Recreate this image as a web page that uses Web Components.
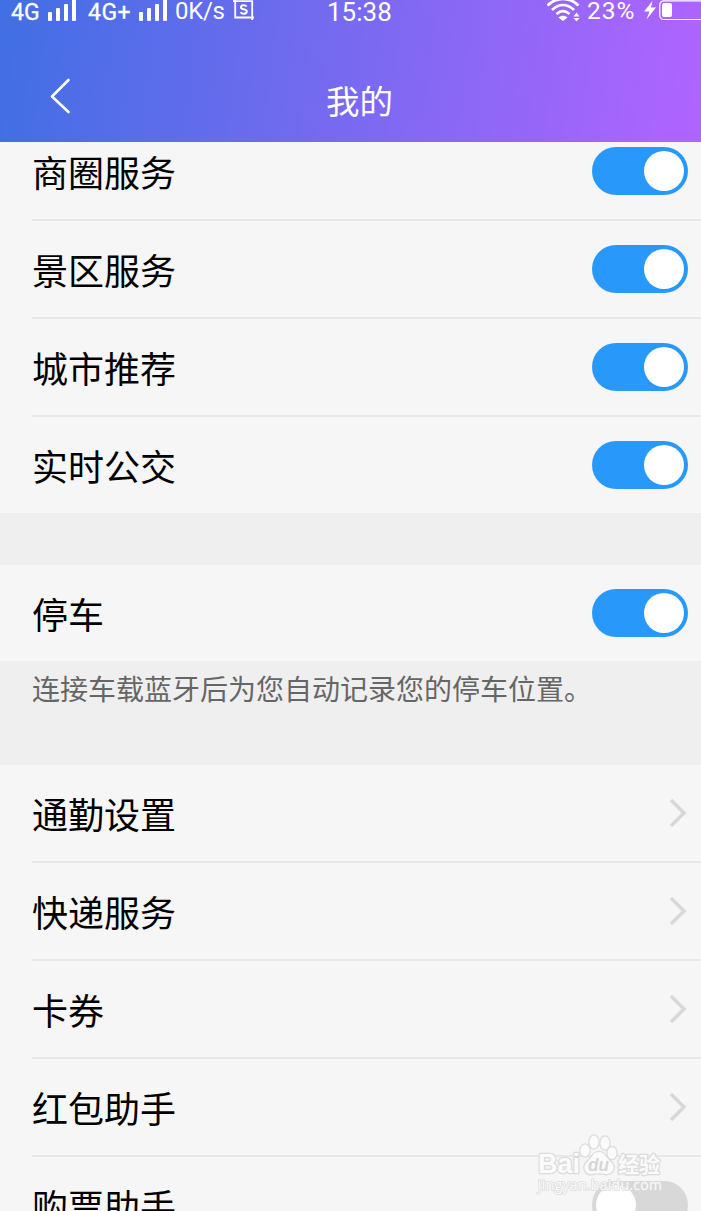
<!DOCTYPE html>
<html lang="zh-CN">
<head>
<meta charset="utf-8">
<title>我的</title>
<style>
  body {
    margin: 0;
    height: 1211px;
    overflow: hidden;
    background: #efefef;
    color: #000;
    font-family: "Noto Sans CJK SC", sans-serif;
  }
</style>
</head>
<body>

<template id="status-bar-template">
  <style>
    :host {
      display: grid;
      grid-template-columns: 327px 220px 154px;
      height: 28px;
      color: #fff;
      font-family: Roboto, sans-serif;
      line-height: 24px;
      white-space: nowrap;
    }
    div {
      display: flex;
      align-items: flex-start;
    }
    svg {
      display: block;
      flex: none;
    }
    span {
      flex: none;
    }
    .net {
      padding-left: 11px;
      font-size: 23px;
    }
    .net span {
      padding-top: 1px;
      -webkit-text-stroke: 0.3px #fff;
    }
    .sim1 { width: 37px; }
    .sim2 {
      width: 50px;
      margin-left: 12px;
      letter-spacing: 0.5px;
    }
    .net .speed {
      width: 57px;
      margin-left: 8px;
      font-size: 24px;
      padding-top: 0;
      line-height: 23px;
      letter-spacing: -0.3px;
      -webkit-text-stroke: 0;
    }
    .time {
      font-size: 26px;
    }
    .battery span {
      width: 57px;
      margin-left: 7px;
      font-size: 24.5px;
      line-height: 22px;
      letter-spacing: 1px;
    }
  </style>
  <div class="net">
    <span class="sim1">4G</span>
    <svg width="28" height="24" fill="#fff">
      <rect y="12" width="4" height="9" rx="1"/><rect x="8" y="8" width="4" height="13" rx="1"/>
      <rect x="16" y="4" width="4" height="17" rx="1"/><rect x="24" y="-2" width="4" height="23" rx="1"/>
    </svg>
    <span class="sim2">4G+</span>
    <svg width="29" height="24" fill="#fff">
      <rect x="1" y="12" width="4" height="9" rx="1"/><rect x="9" y="8" width="4" height="13" rx="1"/>
      <rect x="17" y="4" width="4" height="17" rx="1"/><rect x="25" y="-2" width="4" height="23" rx="1"/>
    </svg>
    <span class="speed">0K/s</span>
    <svg width="24" height="24" fill="none" stroke="#fff" stroke-width="1.800">
      <path d="M1 1.200H20.200V20M3.200 -1V17.500H22"/>
      <path stroke-width="2" d="M14.600 6.500C13.300 4.800 9 4.800 9 7.400C9 10.200 14.800 8.400 14.800 11.500C14.800 14.400 9.800 14.200 8.600 12.200"/>
    </svg>
  </div>
  <div class="time"><span>15:38</span></div>
  <div class="battery">
    <svg width="33" height="24" fill="none" stroke="#fff" stroke-width="2.800">
      <path d="M.5 5.500C10 -3.500 22 -3.500 31.500 5.500M5 10C12 3.500 20 3.500 27 10M9.500 14C14 10 18 10 22.500 14"/>
      <path fill="#fff" stroke="none" d="M11.500 17.500C14.500 15.200 17.500 15.200 20.500 17.500L16 21ZM26.500 16.500L29.500 12.500L32.500 16.500ZM26.500 18L29.500 21.500L32.500 18Z"/>
    </svg>
    <span>23%</span>
    <svg width="57" height="24">
      <path fill="#fff" d="M8.500 1L0 11.500H5.500L2.500 19.500L12 7.500H7Z"/>
      <rect x="15.800" y=".8" width="50" height="18.700" rx="4" fill="none" stroke="#fff" stroke-width="1.200"/>
      <rect x="18" y="3" width="10" height="14" rx="2" fill="#fff"/>
    </svg>
  </div>
</template>

<template id="app-header-template">
  <style>
    :host {
      display: block;
      position: relative;
      z-index: 1;
      height: 142px;
      color: #fff;
      background: linear-gradient(97deg, #416fe3, #b064ff);
    }
    nav {
      display: grid;
      grid-template-columns: 326px 1fr;
      height: 114px;
    }
    svg {
      display: block;
      margin: 49px 0 0 49px;
    }
    h1 {
      margin: 0;
      padding-top: 52px;
      font-size: 33.5px;
      font-weight: 400;
      line-height: 40px;
    }
  </style>
  <status-bar></status-bar>
  <nav>
    <svg width="24" height="38" fill="none" stroke="#fff" stroke-width="2.600" stroke-linecap="round" stroke-linejoin="round">
      <path d="M19.500 3L3 19.500L19.500 35"/>
    </svg>
    <h1><slot></slot></h1>
  </nav>
</template>

<template id="toggle-switch-template">
  <style>
    :host {
      display: flex;
      box-sizing: border-box;
      width: 96px;
      height: 48px;
      padding: 4px;
      border-radius: 24px;
      background: #d8d8d8;
    }
    :host([on]) {
      justify-content: flex-end;
      background: #2898fa;
    }
    i {
      width: 40px;
      height: 40px;
      border-radius: 50%;
      background: #fff;
    }
  </style>
  <i></i>
</template>

<template id="chevron-icon-template">
  <style>
    :host { display: block; }
    svg { display: block; }
  </style>
  <svg width="20" height="32" fill="none" stroke="#d8d8d8" stroke-width="3.500">
    <path d="M3 3L16 16L3 29"/>
  </svg>
</template>

<template id="setting-row-template">
  <style>
    :host {
      display: flex;
      justify-content: space-between;
      align-items: center;
      height: 96px;
      margin-left: 32px;
      padding-right: 13px;
      font-size: 36px;
      line-height: 52px;
    }
    :host(:not(:last-child)) {
      border-bottom: 2px solid #e8e8e8;
    }
  </style>
  <span><slot></slot></span>
  <slot name="action"></slot>
</template>

<template id="setting-group-template">
  <style>
    :host {
      display: block;
      background: #f6f6f6;
    }
  </style>
  <slot></slot>
</template>

<template id="group-note-template">
  <style>
    :host {
      display: block;
      box-sizing: border-box;
      height: 104px;
      padding: 7px 32px 0;
      color: #666;
      font-size: 28px;
      line-height: 40px;
    }
  </style>
  <slot></slot>
</template>

<template id="settings-list-template">
  <style>
    /* the list is scrolled a little way under the header */
    :host {
      display: block;
      margin-top: -19px;
    }
  </style>
  <slot></slot>
</template>

<template id="water-mark-template">
  <style>
    :host {
      position: absolute;
      z-index: 2;
      left: 534px;
      top: 1132px;
    }
    svg { display: block; }
    text {
      font-family: "Open Sans", "Noto Sans CJK SC", sans-serif;
      paint-order: stroke;
    }
    .bai { font-family: "Liberation Sans", sans-serif; }
  </style>
  <svg width="132" height="66" fill="#fbfbfb" stroke="#dcdcdc" stroke-width="2.600" stroke-linejoin="round">
    <text class="bai" x="4" y="41" font-size="27" font-weight="700" textLength="42" lengthAdjust="spacingAndGlyphs">Bai</text>
    <g paint-order="stroke">
      <ellipse cx="51" cy="18.500" rx="4.500" ry="6"/>
      <ellipse cx="60" cy="10" rx="4.500" ry="6.500"/>
      <ellipse cx="71" cy="11" rx="4.500" ry="6.500"/>
      <ellipse cx="78" cy="21" rx="4.500" ry="6"/>
      <path d="M65 20C59 20 58 26 53 30C48 35 51 43 58 42C63 41 67 41 71 42C79 43 82 35 77 30C72 26 71 20 65 20Z"/>
    </g>
    <text class="bai" x="54" y="39" font-size="18" font-weight="700" font-style="italic" fill="#d6d6d6" stroke="none" textLength="21" lengthAdjust="spacingAndGlyphs">du</text>
    <text x="84" y="40" font-size="21" font-weight="700" textLength="42">经验</text>
    <text x="4" y="58" font-size="14" stroke-width="1.600" textLength="124">jingyan.baidu.com</text>
  </svg>
</template>

<app-header>我的</app-header>
<settings-list>
  <setting-group>
    <setting-row>商圈服务<toggle-switch slot="action" on></toggle-switch></setting-row>
    <setting-row>景区服务<toggle-switch slot="action" on></toggle-switch></setting-row>
    <setting-row>城市推荐<toggle-switch slot="action" on></toggle-switch></setting-row>
    <setting-row>实时公交<toggle-switch slot="action" on></toggle-switch></setting-row>
  </setting-group>
  <setting-group style="margin-top: 52px">
    <setting-row>停车<toggle-switch slot="action" on></toggle-switch></setting-row>
  </setting-group>
  <group-note>连接车载蓝牙后为您自动记录您的停车位置。</group-note>
  <setting-group>
    <setting-row>通勤设置<chevron-icon slot="action"></chevron-icon></setting-row>
    <setting-row>快递服务<chevron-icon slot="action"></chevron-icon></setting-row>
    <setting-row>卡券<chevron-icon slot="action"></chevron-icon></setting-row>
    <setting-row>红包助手<chevron-icon slot="action"></chevron-icon></setting-row>
    <setting-row>购票助手<toggle-switch slot="action"></toggle-switch></setting-row>
  </setting-group>
</settings-list>
<water-mark></water-mark>

<script>
  (function () {
    // Every element is a plain shadow root cloned from "<name>-template".
    const names = [
      "status-bar",
      "app-header",
      "toggle-switch",
      "chevron-icon",
      "setting-row",
      "setting-group",
      "group-note",
      "settings-list",
      "water-mark",
    ];

    names.forEach((name) => {
      const template = document.getElementById(name + "-template");
      customElements.define(
        name,
        class extends HTMLElement {
          constructor() {
            super();
            this.attachShadow({ mode: "open" });
            this.shadowRoot.appendChild(template.content.cloneNode(true));
          }
        }
      );
    });
  })();
</script>
</body>
</html>
